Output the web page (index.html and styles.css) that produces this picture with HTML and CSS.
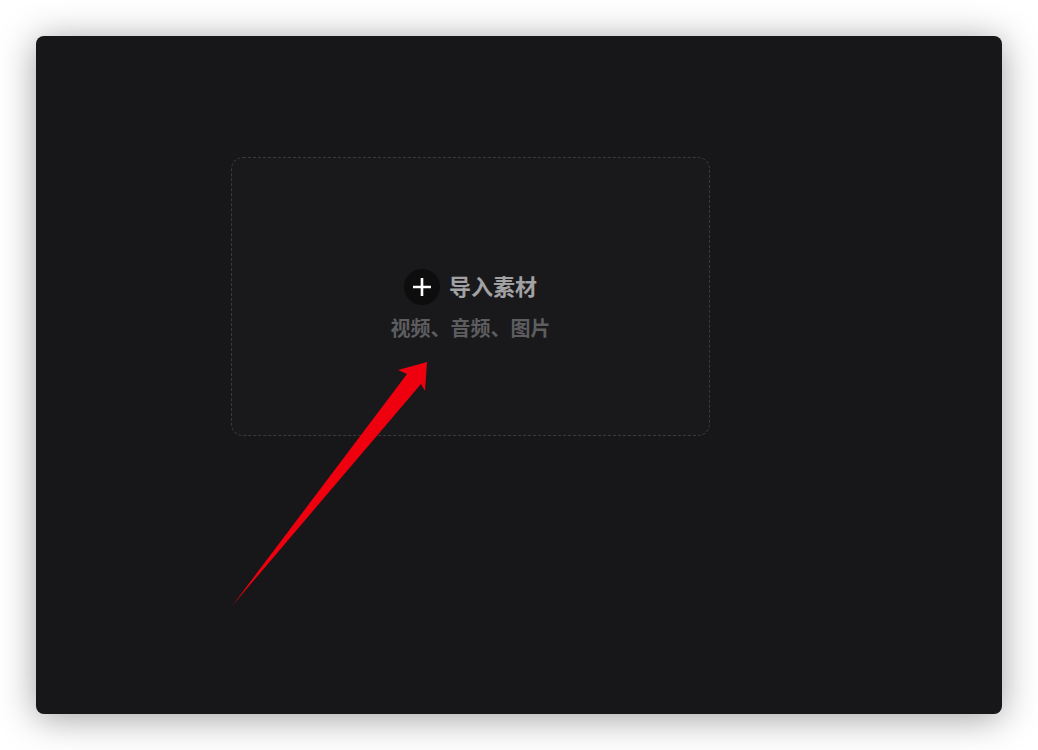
FILE: index.html
```html
<!DOCTYPE html>
<html lang="zh">
<head>
<meta charset="utf-8">
<link rel="stylesheet" href="styles.css">
</head>
<body>
<div class="window">
  <div class="dropzone">
    <div class="import-row">
      <span class="plus-circle">
        <svg width="20" height="20" viewBox="0 0 20 20"><path d="M10 1V19M1 10H19" stroke="#ffffff" stroke-width="2.6" fill="none"/></svg>
      </span>
      <span class="import-title">导入素材</span>
    </div>
    <div class="import-sub">视频、音频、图片</div>
  </div>
</div>
<svg class="arrow" width="1038" height="750" viewBox="0 0 1038 750">
  <polygon points="232,606 407,374 398,370 427,362 425,391 421,384" fill="#ee000e"/>
</svg>
</body>
</html>
```

FILE: styles.css
```css
html, body {
  margin: 0;
  padding: 0;
  background: #ffffff;
  width: 1038px;
  height: 750px;
  overflow: hidden;
}

body {
  padding: 36px 0 0 36px;
  box-sizing: border-box;
  font-family: "Noto Sans CJK SC", "Noto Sans", sans-serif;
}

.window {
  width: 966px;
  height: 678px;
  background: #171719;
  border-radius: 8px;
  box-shadow: 0 4px 36px rgba(0, 0, 0, 0.38);
  padding: 121px 0 0 195px;
  box-sizing: border-box;
}

.dropzone {
  width: 479px;
  height: 279px;
  box-sizing: border-box;
  border: 1px dashed #3a3a3e;
  border-radius: 12px;
  background: #19191b;
  display: flex;
  flex-direction: column;
  align-items: center;
  padding-top: 111px;
}

.import-row {
  display: flex;
  align-items: center;
  gap: 9px;
  height: 36px;
}

.plus-circle {
  width: 36px;
  height: 36px;
  border-radius: 50%;
  background: #0d0d0e;
  display: flex;
  align-items: center;
  justify-content: center;
}

.plus-circle svg {
  display: block;
}

.import-title {
  font-size: 22px;
  font-weight: 700;
  color: #a2a2a4;
  line-height: 32px;
  margin-bottom: 4px;
}

.import-sub {
  margin-top: 10px;
  font-size: 20px;
  font-weight: 700;
  color: #5d5d60;
  line-height: 26px;
}

.arrow {
  position: absolute;
  left: 0;
  top: 0;
  pointer-events: none;
}
```
